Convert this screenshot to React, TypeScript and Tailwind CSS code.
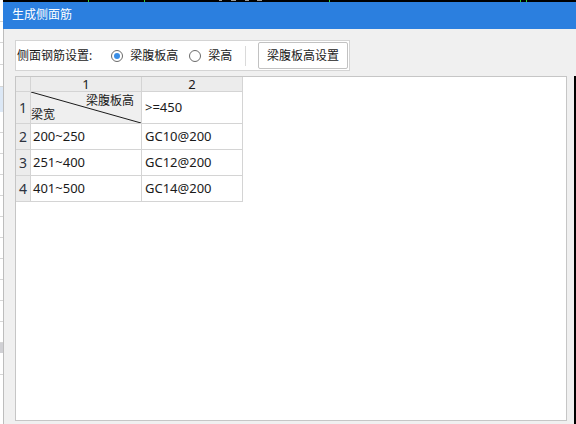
import React from "react";

const font = { fontFamily: '"Noto Sans", "Noto Sans CJK SC", sans-serif' };

const rows = [
  { n: "2", a: "200~250", b: "GC10@200" },
  { n: "3", a: "251~400", b: "GC12@200" },
  { n: "4", a: "401~500", b: "GC14@200" },
];

function Radio({ checked, label }: { checked?: boolean; label: string }) {
  return (
    <label className="flex items-center">
      <span className="flex h-[12px] w-[12px] items-center justify-center rounded-full border border-[#6a6a6a] bg-white">
        {checked && <span className="h-[6px] w-[6px] rounded-full bg-[#3a8ee6]" />}
      </span>
      <span className="ml-[7px]">{label}</span>
    </label>
  );
}

export default function App() {
  return (
    <div
      className="flex h-[424px] w-[576px] overflow-hidden bg-white text-[12px] text-[#1a1a1a]"
      style={font}
    >
      {/* background app peeking out on the left */}
      <div className="flex w-[3px] flex-col bg-white">
        <div className="h-[22px] border-b border-[#d6d6d6]" />
        <div className="h-[21px] border-b border-[#d6d6d6]" />
        <div className="h-[22px] border-b border-[#d6d6d6]" />
        <div className="h-[22px] border-b border-[#d6d6d6]" />
        <div className="h-[25px] bg-[#dce8f6]" />
        <div className="h-[21px] border-b border-[#d6d6d6]" />
        <div className="h-[21px] border-b border-[#d6d6d6]" />
        <div className="h-[21px] border-b border-[#d6d6d6]" />
        <div className="h-[21px] border-b border-[#d6d6d6]" />
        <div className="h-[21px] border-b border-[#d6d6d6]" />
        <div className="h-[21px] border-b border-[#d6d6d6]" />
        <div className="h-[21px] border-b border-[#d6d6d6]" />
        <div className="h-[21px] border-b border-[#d6d6d6]" />
        <div className="h-[21px] border-b border-[#d6d6d6]" />
        <div className="h-[21px] border-b border-[#d6d6d6]" />
        <div className="h-[21px] border-b border-[#d6d6d6]" />
        <div className="h-[10px] bg-[#d0d0d4]" />
        <div className="h-[22px] border-b border-[#d6d6d6]" />
      </div>

      <div className="flex flex-1 flex-col">
        {/* strip of canvas behind the dialog */}
        <div className="relative h-[2px] bg-black">
          <span className="absolute left-[85px] top-0 h-[2px] w-[1px] bg-[#2fd12f]" />
          <span className="absolute left-[141px] top-0 h-[2px] w-[1px] bg-[#2fd12f]" />
          <span className="absolute left-[216px] top-0 h-[1px] w-[3px] bg-[#9a9a9a]" />
          <span className="absolute left-[228px] top-0 h-[1px] w-[5px] bg-[#9a9a9a]" />
          <span className="absolute left-[242px] top-0 h-[1px] w-[4px] bg-[#9a9a9a]" />
          <span className="absolute left-[254px] top-0 h-[1px] w-[5px] bg-[#9a9a9a]" />
          <span className="absolute left-[326px] top-0 h-[2px] w-[1px] bg-[#2fd12f]" />
          <span className="absolute left-[517px] top-0 h-[2px] w-[1px] bg-[#2fd12f]" />
          <span className="absolute left-[523px] top-0 h-[2px] w-[1px] bg-[#2fd12f]" />
        </div>

        {/* title bar */}
        <div className="flex h-[27px] items-center bg-[#2b7fdf] pb-[1px] pl-[9px] text-white">
          生成侧面筋
        </div>

        {/* body */}
        <div className="flex flex-1 flex-col border-l border-[#bdbdbd] bg-[#f0f0f0] pl-[11px] pt-[11px]">
          <div className="flex h-[31px] w-[335px] items-center border border-[#d4d4d4] bg-white pl-[1px] pr-[1px]">
            <span>侧面钢筋设置:</span>
            <div className="ml-[19px]">
              <Radio checked label="梁腹板高" />
            </div>
            <div className="ml-[11px]">
              <Radio label="梁高" />
            </div>
            <div className="ml-[13px] h-[20px] w-[1px] bg-[#dadada]" />
            <button className="ml-auto flex h-[27px] w-[90px] items-center justify-center rounded-[2px] border border-[#c2c2c2] bg-white pt-[1px] text-[12px] text-[#1a1a1a]">
              梁腹板高设置
            </button>
          </div>

          <div className="mt-[5px] flex flex-1">
            <div className="mb-[3px] w-[552px] border border-[#c6c6c6] bg-white">
              {/* header row */}
              <div className="flex">
                <div className="h-[15px] w-[15px] border-b border-r border-[#d4d4d4] bg-[#ececec]" />
                <div className="flex h-[15px] w-[111px] items-center justify-center border-b border-r border-[#d4d4d4] bg-[#ececec] text-[13px] leading-none">
                  1
                </div>
                <div className="flex h-[15px] w-[101px] items-center justify-center border-b border-r border-[#d4d4d4] bg-[#ececec] text-[13px] leading-none">
                  2
                </div>
              </div>

              {/* row 1 with diagonal cell */}
              <div className="flex">
                <div className="flex h-[32px] w-[15px] items-center justify-center border-b border-r border-[#d4d4d4] bg-[#ececec] text-[14px] text-[#2d3340]">
                  1
                </div>
                <div className="relative h-[32px] w-[111px] border-b border-r border-[#d4d4d4] bg-[#efefef]">
                  <svg className="absolute inset-0" width="110" height="31" viewBox="0 0 110 31">
                    <line x1="0" y1="0" x2="110" y2="31" stroke="#1a1a1a" strokeWidth="1" />
                  </svg>
                  <span className="absolute right-[7px] top-[1px] leading-[16px]">梁腹板高</span>
                  <span className="absolute bottom-[0px] left-[0px] leading-[16px]">梁宽</span>
                </div>
                <div className="flex h-[32px] w-[101px] items-center border-b border-r border-[#d4d4d4] pl-[3px] text-[13px]">
                  &gt;=450
                </div>
              </div>

              {rows.map((r) => (
                <div key={r.n} className="flex">
                  <div className="flex h-[26px] w-[15px] items-center justify-center border-b border-r border-[#d4d4d4] bg-[#ececec] text-[14px] text-[#2d3340]">
                    {r.n}
                  </div>
                  <div className="flex h-[26px] w-[111px] items-center border-b border-r border-[#d4d4d4] pl-[2px] text-[13px]">
                    {r.a}
                  </div>
                  <div className="flex h-[26px] w-[101px] items-center border-b border-r border-[#d4d4d4] pl-[3px] text-[13px]">
                    {r.b}
                  </div>
                </div>
              ))}
            </div>
            <div className="ml-[7px] w-[2px] bg-black" />
          </div>
        </div>
      </div>
    </div>
  );
}
